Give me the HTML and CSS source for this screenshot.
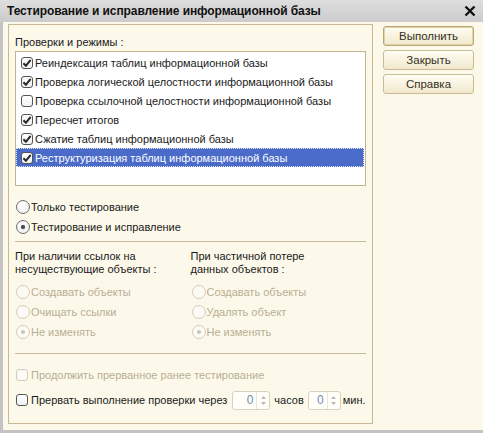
FILE: index.html
```html
<!DOCTYPE html>
<html lang="ru">
<head>
<meta charset="utf-8">
<title>Тестирование и исправление информационной базы</title>
<link rel="stylesheet" href="styles.css">
</head>
<body>
<div class="window">
  <div class="titlebar">
    <span class="title">Тестирование и исправление информационной базы</span>
    <svg class="close" viewBox="0 0 12 12" width="12" height="12"><path d="M1.5 1.5 L10.5 10.5 M10.5 1.5 L1.5 10.5" stroke="#111" stroke-width="2.4" fill="none"/></svg>
  </div>
  <div class="body">
    <div class="panel">
      <div class="caption">Проверки и режимы :</div>
      <div class="list">
        <div class="row"><span class="cb"><svg viewBox="0 0 10 10"><path d="M1.4 5.2 L3.9 7.8 L8.6 2" /></svg></span>Реиндексация таблиц информационной базы</div>
        <div class="row"><span class="cb"><svg viewBox="0 0 10 10"><path d="M1.4 5.2 L3.9 7.8 L8.6 2" /></svg></span>Проверка логической целостности информационной базы</div>
        <div class="row"><span class="cb"></span>Проверка ссылочной целостности информационной базы</div>
        <div class="row"><span class="cb"><svg viewBox="0 0 10 10"><path d="M1.4 5.2 L3.9 7.8 L8.6 2" /></svg></span>Пересчет итогов</div>
        <div class="row"><span class="cb"><svg viewBox="0 0 10 10"><path d="M1.4 5.2 L3.9 7.8 L8.6 2" /></svg></span>Сжатие таблиц информационной базы</div>
        <div class="row selected"><span class="cb"><svg viewBox="0 0 10 10"><path d="M1.4 5.2 L3.9 7.8 L8.6 2" /></svg></span>Реструктуризация таблиц информационной базы</div>
      </div>
      <div class="modes">
        <div class="opt"><span class="rb"></span>Только тестирование</div>
        <div class="opt"><span class="rb on"></span>Тестирование и исправление</div>
      </div>
      <div class="sep"></div>
      <div class="groups">
        <div class="group">
          <div class="glabel">При наличии ссылок на<br>несуществующие объекты :</div>
          <div class="opt dis"><span class="rb"></span>Создавать объекты</div>
          <div class="opt dis"><span class="rb"></span>Очищать ссылки</div>
          <div class="opt dis"><span class="rb on"></span>Не изменять</div>
        </div>
        <div class="group">
          <div class="glabel">При частичной потере<br>данных объектов :</div>
          <div class="opt dis"><span class="rb"></span>Создавать объекты</div>
          <div class="opt dis"><span class="rb"></span>Удалять объект</div>
          <div class="opt dis"><span class="rb on"></span>Не изменять</div>
        </div>
      </div>
      <div class="sep sep2"></div>
      <div class="opt dis cont"><span class="cb"></span>Продолжить прерванное ранее тестирование</div>
      <div class="opt stop"><span class="cb"></span>Прервать выполнение проверки через<span class="spin s1"><span class="val">0</span><span class="arrows"><svg viewBox="0 0 7 13" width="7" height="13"><path d="M3.5 2 L6 5 L1 5 Z M3.5 11 L6 8 L1 8 Z" fill="#b9b9b9"/></svg></span></span>часов<span class="spin s2"><span class="val">0</span><span class="arrows"><svg viewBox="0 0 7 13" width="7" height="13"><path d="M3.5 2 L6 5 L1 5 Z M3.5 11 L6 8 L1 8 Z" fill="#b9b9b9"/></svg></span></span>мин.</div>
    </div>
    <div class="buttons">
      <div class="btn default">Выполнить</div>
      <div class="btn">Закрыть</div>
      <div class="btn">Справка</div>
    </div>
  </div>
</div>
</body>
</html>
```

FILE: styles.css
```css
html, body {
  margin: 0;
  padding: 0;
}
body {
  width: 483px;
  height: 433px;
  overflow: hidden;
  font-family: "Liberation Sans", Arial, sans-serif;
  font-size: 11px;
  color: #1a1a1a;
  background: #fbf8e8;
}
.window {
  box-sizing: border-box;
  width: 483px;
  height: 433px;
  background: #fcf9ea;
  border-left: 3px solid #c3c3c3;
  border-bottom: 3px solid #c3c3c3;
  display: flex;
  flex-direction: column;
}
.titlebar {
  height: 22px;
  margin-left: -3px;
  padding: 0 7px;
  display: flex;
  align-items: center;
  justify-content: space-between;
  background: linear-gradient(#dedede, #cbcbcb);
}
.title {
  font-weight: bold;
  font-size: 12px;
  letter-spacing: -0.1px;
  color: #111;
}
.body {
  display: flex;
  padding: 2px 0 0 5px;
}
.panel {
  box-sizing: border-box;
  width: 365px;
  height: 400px;
  border: 1px solid #c7ba92;
  padding: 10px 6px 0 6px;
  display: flex;
  flex-direction: column;
}
.caption {
  line-height: 14px;
  height: 14px;
}
.list {
  box-sizing: border-box;
  margin-top: 2px;
  width: 351px;
  height: 135px;
  background: #fff;
  border: 1px solid #c2b58d;
  padding: 1px 1px 0 0;
}
.row {
  box-sizing: border-box;
  height: 19px;
  display: flex;
  align-items: center;
  padding-left: 5px;
  white-space: nowrap;
}
.row.selected {
  background: #4a6cc8;
  color: #fff;
  outline: 1px dotted #dfe6fa;
  outline-offset: -1px;
}
.cb {
  box-sizing: border-box;
  flex: none;
  width: 12px;
  height: 12px;
  border: 1px solid #555;
  border-radius: 3px;
  background: linear-gradient(#fff, #f1f1f1);
  margin-right: 2px;
  display: flex;
  align-items: center;
  justify-content: center;
}
.cb svg {
  width: 10px;
  height: 10px;
}
.cb svg path {
  fill: none;
  stroke: #2a2a2a;
  stroke-width: 2;
}
.modes {
  margin-top: 11px;
}
.opt {
  height: 20px;
  display: flex;
  align-items: center;
  white-space: nowrap;
}
.rb {
  box-sizing: border-box;
  flex: none;
  width: 14px;
  height: 14px;
  border: 1px solid #6f6f6f;
  border-radius: 50%;
  background: radial-gradient(circle at 40% 35%, #fff, #ececec);
  margin-left: 1px;
  margin-right: 1px;
  position: relative;
}
.rb.on::after {
  content: "";
  position: absolute;
  left: 4px;
  top: 4px;
  width: 4px;
  height: 4px;
  border-radius: 50%;
  background: #4a4a4a;
  box-shadow: 0 0 1px #777;
}
.opt.dis {
  color: #b9ae94;
}
.opt.dis .rb {
  border-color: #d3cdbd;
  background: #fbfaf4;
}
.opt.dis .rb.on::after {
  background: #c9c4b6;
  box-shadow: none;
}
.opt.dis .cb {
  border-color: #d3cdbd;
  background: #fbfaf4;
}
.sep {
  margin-top: 4px;
  width: 351px;
  height: 1px;
  background: #c8bc97;
}
.groups {
  display: flex;
  margin-top: 8px;
}
.group {
  width: 178px;
}
.glabel {
  line-height: 13px;
  margin-bottom: 6px;
}
.sep2 {
  margin-top: 11px;
}
.cont {
  margin-top: 11px;
}
.cont .cb, .stop .cb {
  margin-left: 1px;
  margin-right: 3px;
}
.stop {
  margin-top: 4px;
  height: 22px;
}
.spin {
  box-sizing: border-box;
  height: 19px;
  display: inline-flex;
  align-items: stretch;
  border: 1px solid #d9d1bd;
  border-radius: 3px;
  background: #fffef9;
  margin: 0 4px 0 5px;
}
.spin.s1 {
  width: 38px;
}
.spin.s2 {
  width: 33px;
  margin-left: 4px;
  margin-right: 2px;
}
.val {
  flex: 1;
  text-align: right;
  padding-right: 3px;
  line-height: 17px;
  font-size: 12px;
  color: #6b8fb5;
}
.arrows {
  width: 12px;
  display: flex;
  align-items: center;
  justify-content: center;
  border-left: 1px solid #ece6d6;
}
.buttons {
  margin-left: 10px;
  margin-top: 2px;
  width: 91px;
  display: flex;
  flex-direction: column;
  gap: 4px;
}
.btn {
  box-sizing: border-box;
  height: 20px;
  line-height: 18px;
  text-align: center;
  font-size: 11.5px;
  border: 1px solid #c9bc92;
  border-radius: 3px;
  background: linear-gradient(#fffdf3, #f1e9cd);
  color: #35301f;
}
.btn.default {
  border-color: #b8a775;
  box-shadow: inset 0 0 0 1px #e1d4a8;
}
```
